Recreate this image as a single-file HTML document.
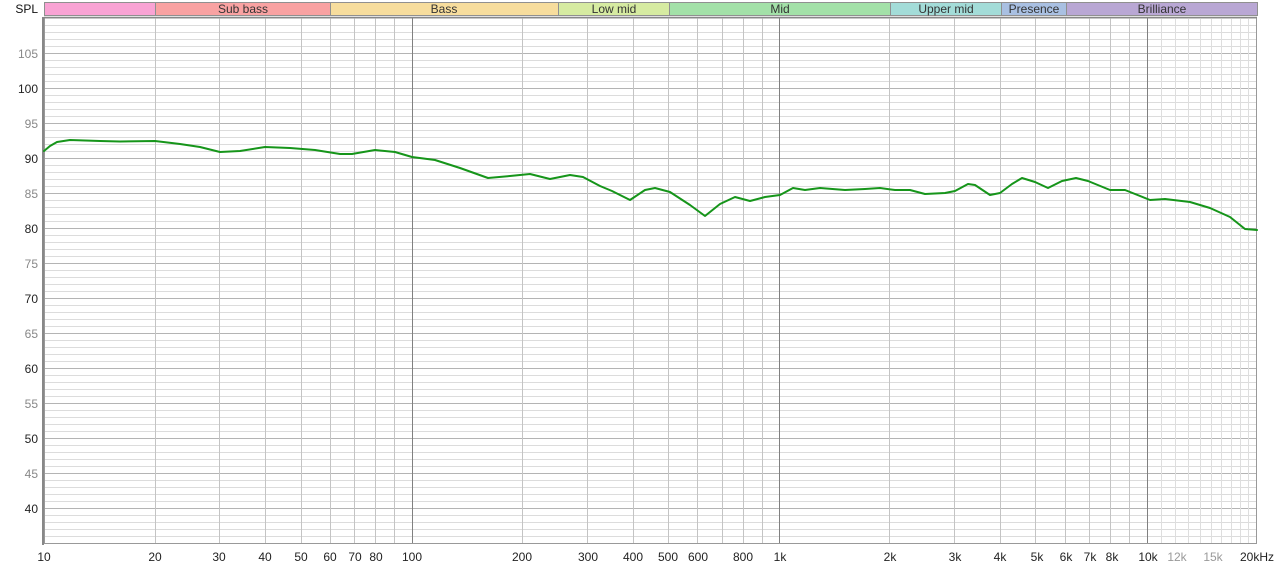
<!DOCTYPE html>
<html><head><style>
body{margin:0;background:#fff;width:1280px;height:568px;overflow:hidden;font-family:"Liberation Sans",sans-serif}
</style></head><body>
<svg width="1280" height="568" xmlns="http://www.w3.org/2000/svg" font-family="Liberation Sans, sans-serif" font-size="12">
<defs>
<pattern id="hm" x="0" y="18" width="10" height="7" patternUnits="userSpaceOnUse"><line x1="0" y1="0.5" x2="10" y2="0.5" stroke="#dcdcdc" stroke-width="1"/></pattern>
</defs>
<!-- header bands -->
<g stroke="#909090" stroke-width="1" font-size="12" fill="#444">
<rect x="44.5" y="2.5" width="111" height="13" fill="#f9a3d4"/>
<rect x="155.5" y="2.5" width="175" height="13" fill="#f9a2a2"/>
<rect x="330.5" y="2.5" width="228" height="13" fill="#f7dd9d"/>
<rect x="558.5" y="2.5" width="111" height="13" fill="#d6eba1"/>
<rect x="669.5" y="2.5" width="221" height="13" fill="#a3e1a8"/>
<rect x="890.5" y="2.5" width="111" height="13" fill="#a3dcd8"/>
<rect x="1001.5" y="2.5" width="65" height="13" fill="#a9c0e2"/>
<rect x="1066.5" y="2.5" width="191" height="13" fill="#b9a7d4"/>
</g>
<g fill="#333" text-anchor="middle" font-size="12">
<text x="243" y="13">Sub bass</text>
<text x="444" y="13">Bass</text>
<text x="614" y="13">Low mid</text>
<text x="780" y="13">Mid</text>
<text x="946" y="13">Upper mid</text>
<text x="1034" y="13">Presence</text>
<text x="1162" y="13">Brilliance</text>
</g>
<text x="38" y="13" text-anchor="end" fill="#111">SPL</text>
<!-- plot -->
<rect x="44" y="17" width="1213" height="527" fill="#fff"/>
<rect x="44" y="18" width="1213" height="526" fill="url(#hm)"/>
<g stroke="#b4b4b4" stroke-width="1">
<line x1="44" x2="1257" y1="53.5" y2="53.5"/><line x1="44" x2="1257" y1="88.5" y2="88.5"/>
<line x1="44" x2="1257" y1="123.5" y2="123.5"/><line x1="44" x2="1257" y1="158.5" y2="158.5"/>
<line x1="44" x2="1257" y1="193.5" y2="193.5"/><line x1="44" x2="1257" y1="228.5" y2="228.5"/>
<line x1="44" x2="1257" y1="263.5" y2="263.5"/><line x1="44" x2="1257" y1="298.5" y2="298.5"/>
<line x1="44" x2="1257" y1="333.5" y2="333.5"/><line x1="44" x2="1257" y1="368.5" y2="368.5"/>
<line x1="44" x2="1257" y1="403.5" y2="403.5"/><line x1="44" x2="1257" y1="438.5" y2="438.5"/>
<line x1="44" x2="1257" y1="473.5" y2="473.5"/><line x1="44" x2="1257" y1="508.5" y2="508.5"/>
</g>
<g stroke="#c4c4c4" stroke-width="1">
<line x1="155.5" x2="155.5" y1="17" y2="544"/><line x1="219.5" x2="219.5" y1="17" y2="544"/>
<line x1="265.5" x2="265.5" y1="17" y2="544"/><line x1="301.5" x2="301.5" y1="17" y2="544"/>
<line x1="330.5" x2="330.5" y1="17" y2="544"/><line x1="354.5" x2="354.5" y1="17" y2="544"/>
<line x1="375.5" x2="375.5" y1="17" y2="544"/><line x1="394.5" x2="394.5" y1="17" y2="544"/>
<line x1="522.5" x2="522.5" y1="17" y2="544"/><line x1="587.5" x2="587.5" y1="17" y2="544"/>
<line x1="633.5" x2="633.5" y1="17" y2="544"/><line x1="668.5" x2="668.5" y1="17" y2="544"/>
<line x1="697.5" x2="697.5" y1="17" y2="544"/><line x1="722.5" x2="722.5" y1="17" y2="544"/>
<line x1="743.5" x2="743.5" y1="17" y2="544"/><line x1="762.5" x2="762.5" y1="17" y2="544"/>
<line x1="889.5" x2="889.5" y1="17" y2="544"/><line x1="954.5" x2="954.5" y1="17" y2="544"/>
<line x1="1000.5" x2="1000.5" y1="17" y2="544"/><line x1="1035.5" x2="1035.5" y1="17" y2="544"/>
<line x1="1065.5" x2="1065.5" y1="17" y2="544"/><line x1="1089.5" x2="1089.5" y1="17" y2="544"/>
<line x1="1110.5" x2="1110.5" y1="17" y2="544"/><line x1="1129.5" x2="1129.5" y1="17" y2="544"/>
</g>
<g stroke="#dedede" stroke-width="1">
<line x1="1161.5" x2="1161.5" y1="17" y2="544"/><line x1="1175.5" x2="1175.5" y1="17" y2="544"/>
<line x1="1188.5" x2="1188.5" y1="17" y2="544"/><line x1="1200.5" x2="1200.5" y1="17" y2="544"/>
<line x1="1211.5" x2="1211.5" y1="17" y2="544"/><line x1="1221.5" x2="1221.5" y1="17" y2="544"/>
<line x1="1231.5" x2="1231.5" y1="17" y2="544"/><line x1="1240.5" x2="1240.5" y1="17" y2="544"/>
<line x1="1248.5" x2="1248.5" y1="17" y2="544"/>
</g>
<g stroke="#808080" stroke-width="1">
<line x1="412.5" x2="412.5" y1="17" y2="544"/><line x1="779.5" x2="779.5" y1="17" y2="544"/>
<line x1="1147.5" x2="1147.5" y1="17" y2="544"/>
</g>
<rect x="44.5" y="17.5" width="1212" height="526" fill="none" stroke="#999"/>
<line x1="43" y1="17" x2="43" y2="545" stroke="#888" stroke-width="2"/>
<line x1="44" y1="17.5" x2="1257" y2="17.5" stroke="#888" stroke-width="1.5"/>
<!-- curve -->
<polyline fill="none" stroke="#16951a" stroke-width="2" stroke-linejoin="round" stroke-linecap="round" points="44,151 50,146 57,142 70,140 100,141 120,141.5 155,141 180,144 200,147 220,152 240,151 265,147 290,148 315,150 340,154 352,154 375,150 395,152 412,157 435,160 460,168 488,178 510,176 530,174 550,179 570,175 583,177 600,186 612,191 630,200 645,190 655,188 670,192 690,205 705,216 720,204 735,197 750,201 765,197 780,195 793,188 805,190 820,188 845,190 865,189 880,188 895,190 910,190 925,194 945,193 955,191 968,184 975,185 990,195 1000,193 1012,184 1022,178 1035,182 1048,188 1062,181 1076,178 1088,181 1110,190 1125,190 1150,200 1165,199 1190,202 1210,208 1230,217 1245,229 1257,230"/>
<!-- y labels -->
<g text-anchor="end" font-size="12">
<text x="38" y="58" fill="#888">105</text>
<text x="38" y="93" fill="#222">100</text>
<text x="38" y="128" fill="#888">95</text>
<text x="38" y="163" fill="#222">90</text>
<text x="38" y="198" fill="#888">85</text>
<text x="38" y="233" fill="#222">80</text>
<text x="38" y="268" fill="#888">75</text>
<text x="38" y="303" fill="#222">70</text>
<text x="38" y="338" fill="#888">65</text>
<text x="38" y="373" fill="#222">60</text>
<text x="38" y="408" fill="#888">55</text>
<text x="38" y="443" fill="#222">50</text>
<text x="38" y="478" fill="#888">45</text>
<text x="38" y="513" fill="#222">40</text>
</g>
<!-- x labels -->
<g text-anchor="middle" font-size="12" fill="#222">
<text x="44" y="561">10</text><text x="155" y="561">20</text><text x="219" y="561">30</text>
<text x="265" y="561">40</text><text x="301" y="561">50</text><text x="330" y="561">60</text>
<text x="355" y="561">70</text><text x="376" y="561">80</text><text x="412" y="561">100</text>
<text x="522" y="561">200</text><text x="588" y="561">300</text><text x="633" y="561">400</text>
<text x="668" y="561">500</text><text x="698" y="561">600</text><text x="743" y="561">800</text>
<text x="780" y="561">1k</text><text x="890" y="561">2k</text><text x="955" y="561">3k</text>
<text x="1000" y="561">4k</text><text x="1037" y="561">5k</text><text x="1066" y="561">6k</text>
<text x="1090" y="561">7k</text><text x="1112" y="561">8k</text><text x="1148" y="561">10k</text>
<text x="1177" y="561" fill="#999">12k</text><text x="1213" y="561" fill="#999">15k</text>
<text x="1257" y="561">20kHz</text>
</g>
</svg>
</body></html>
